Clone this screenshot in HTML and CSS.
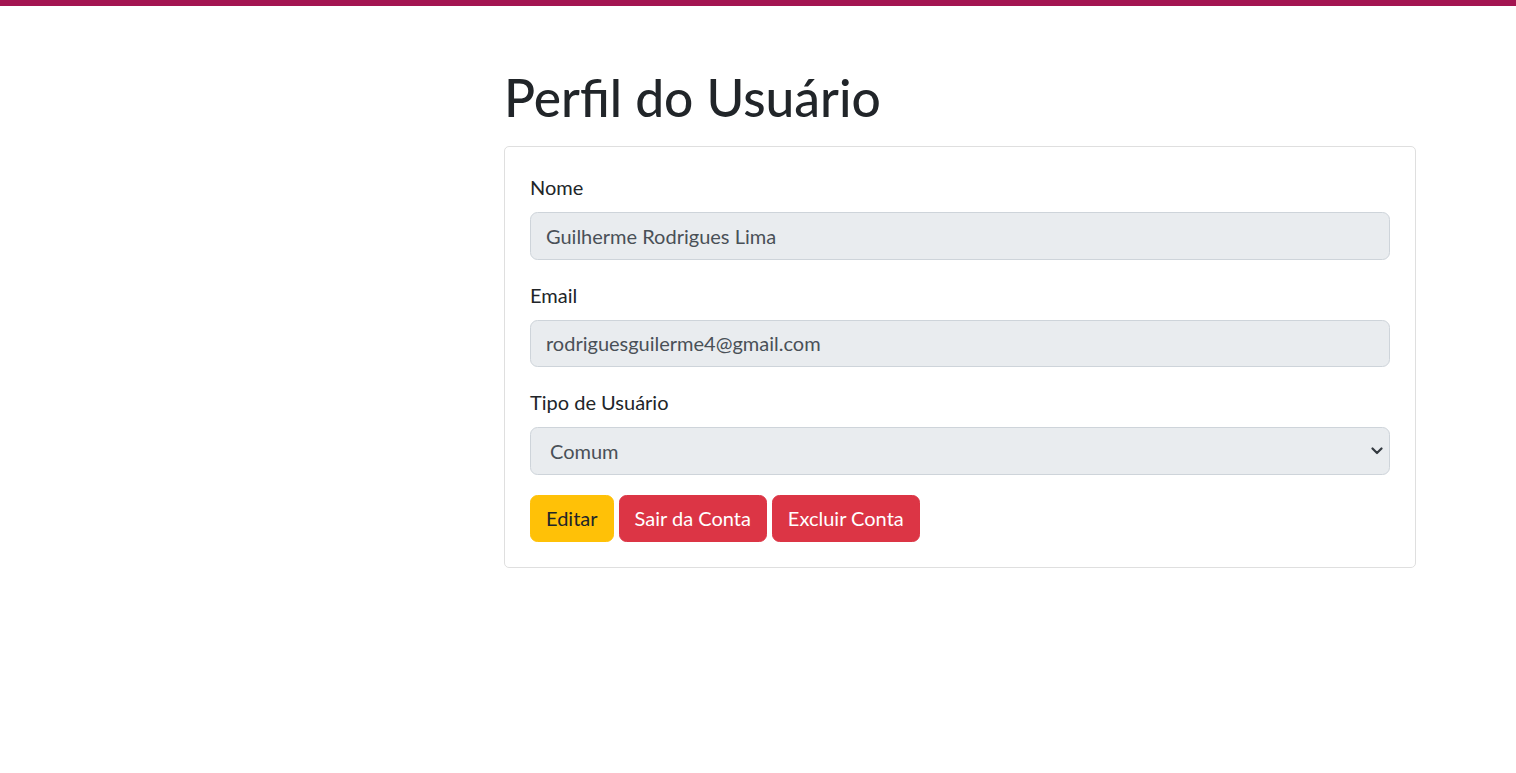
FILE: index.html
```html
<!DOCTYPE html>
<html lang="pt-BR">
<head>
<meta charset="utf-8">
<title>Perfil do Usuário</title>
<link rel="stylesheet" href="styles.css">
</head>
<body>
<div class="topbar"></div>
<main class="page">
  <section class="content">
    <h1 class="title">Perfil do Usuário</h1>
    <div class="card">
      <div class="field">
        <label class="label" for="nome">Nome</label>
        <input class="control" id="nome" type="text" value="Guilherme Rodrigues Lima" disabled>
      </div>
      <div class="field">
        <label class="label" for="email">Email</label>
        <input class="control" id="email" type="email" value="rodriguesguilerme4@gmail.com" disabled>
      </div>
      <div class="field">
        <label class="label" for="tipo">Tipo de Usuário</label>
        <div class="select-wrap">
          <select class="control select" id="tipo" disabled>
            <option>Comum</option>
          </select>
          <svg class="chevron" width="12" height="8" viewBox="0 0 12 8"><path d="M1.5 1.5 6 6l4.5-4.5" fill="none" stroke="#343a40" stroke-width="2.2" stroke-linecap="round" stroke-linejoin="round"/></svg>
        </div>
      </div>
      <div class="actions">
        <button class="btn btn-warning" type="button">Editar</button>
        <button class="btn btn-danger" type="button">Sair da Conta</button>
        <button class="btn btn-danger" type="button">Excluir Conta</button>
      </div>
    </div>
  </section>
</main>
</body>
</html>
```
FILE: styles.css
```css
* { box-sizing: border-box; }
html, body { margin: 0; padding: 0; }
body {
  font-family: Lato, "Noto Sans", "Liberation Sans", sans-serif;
  font-size: 20px;
  line-height: 1.5;
  color: #212529;
  background: #fff;
}
.topbar { height: 6px; background: #a31551; }
.page {
  display: flex;
  justify-content: flex-end;
  padding: 61px 100px 0 0;
}
.content { width: 912px; }
.title {
  margin: 0 0 19px;
  font-size: 51.5px;
  font-weight: 500;
  line-height: 60px;
  color: #212529;
}
.card {
  border: 1px solid #dfdfdf;
  border-radius: 5px;
  padding: 25px;
}
.field { margin-bottom: 20px; }
.label {
  display: block;
  margin-bottom: 10px;
  line-height: 30px;
}
.control {
  display: block;
  width: 100%;
  height: 47.5px;
  padding: 7.5px 15px;
  font: inherit;
  color: #495057;
  background: #e9ecef;
  border: 1px solid #ced4da;
  border-radius: 7.5px;
  opacity: 1;
}
.select-wrap { position: relative; }
.select {
  appearance: none;
  -webkit-appearance: none;
  padding-left: 19px;
  padding-right: 45px;
}
.chevron {
  position: absolute;
  right: 7px;
  top: 20px;
  width: 12px;
  height: 8px;
}
.actions { display: flex; gap: 5px; }
.btn {
  font: inherit;
  line-height: 30px;
  padding: 7.5px 15px;
  border: 1px solid transparent;
  border-radius: 7.5px;
  cursor: pointer;
}
.btn-warning { background: #ffc107; border-color: #ffc107; color: #212529; }
.btn-danger { background: #dc3545; border-color: #dc3545; color: #fff; }
```
